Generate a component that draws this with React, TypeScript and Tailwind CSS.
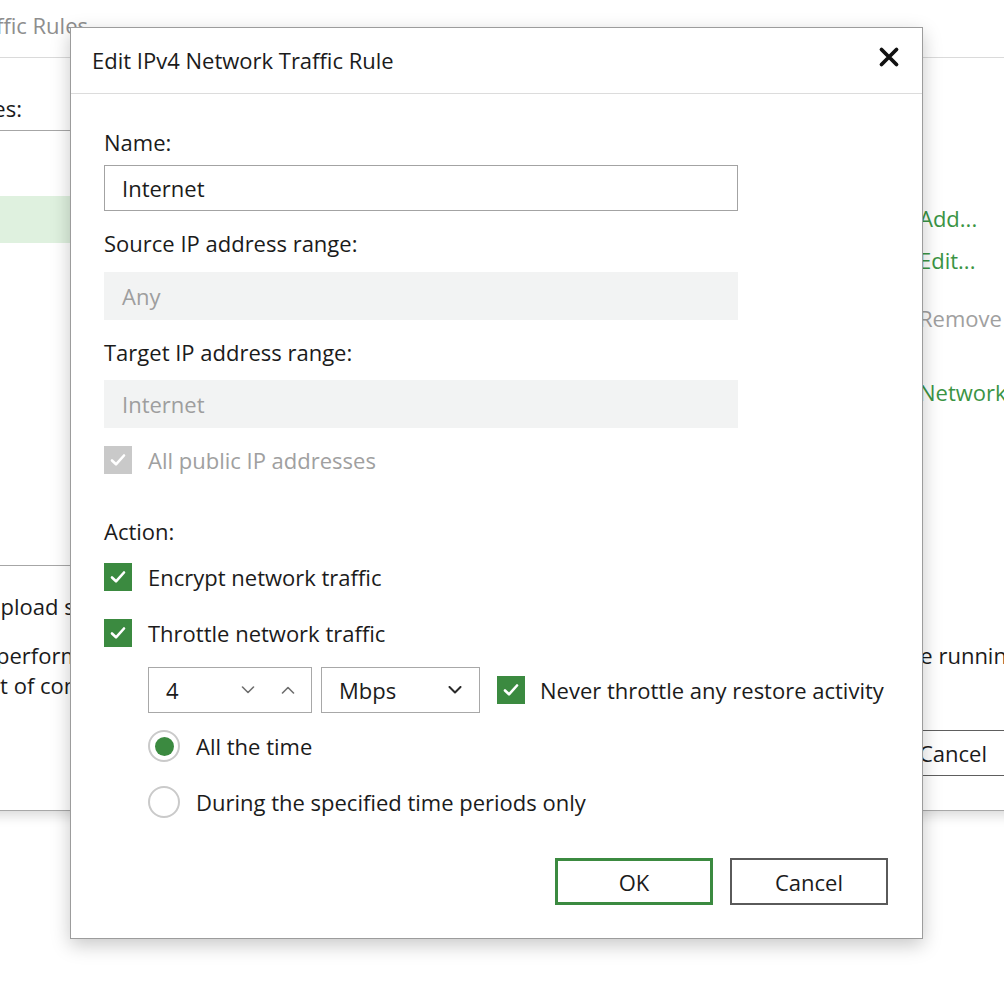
import React from 'react';

function Tick({ disabled = false }: { disabled?: boolean }) {
  return (
    <span
      className={`flex h-[28px] w-[28px] shrink-0 items-center justify-center ${
        disabled ? 'bg-[#c9c9c9]' : 'bg-[#3b8a40]'
      }`}
    >
      <svg width="20" height="20" viewBox="0 0 20 20" fill="none">
        <path d="M4 10.5 L8 14.3 L16 5.5" stroke="white" strokeWidth="2.6" strokeLinecap="round" strokeLinejoin="round" />
      </svg>
    </span>
  );
}

function Radio({ on = false }: { on?: boolean }) {
  return (
    <span className="flex h-[32px] w-[32px] shrink-0 items-center justify-center rounded-full border-2 border-[#cacaca] bg-white">
      {on && <span className="h-[19px] w-[19px] rounded-full bg-[#3b8a40]" />}
    </span>
  );
}

function Chevron({ up = false, bold = false }: { up?: boolean; bold?: boolean }) {
  return (
    <svg width="14" height="8" viewBox="0 0 14 8" fill="none">
      <path
        d={up ? 'M1.5 7 L7 1.5 L12.5 7' : 'M1.5 1 L7 6.5 L12.5 1'}
        stroke={bold ? '#2a2a2a' : '#6e6e6e'}
        strokeWidth={bold ? 2 : 1.6}
        strokeLinecap="round"
        strokeLinejoin="round"
      />
    </svg>
  );
}

function CheckRow({ label, disabled = false }: { label: string; disabled?: boolean }) {
  return (
    <div className="flex h-[28px] items-center gap-[16px]">
      <Tick disabled={disabled} />
      <span className={disabled ? 'text-[#a0a0a0]' : ''}>{label}</span>
    </div>
  );
}

export default function App() {
  return (
    <div className="relative h-[988px] w-[1004px] overflow-hidden bg-white font-['Open_Sans','Noto_Sans',sans-serif] text-[22px] leading-[28px] text-[#1b1b1b]">
      {/* window behind the dialog */}
      <div className="absolute left-[-300px] top-[-20px] flex h-[831px] w-[1500px] flex-col border-b border-[#a8a8a8] bg-white shadow-[0_4px_12px_rgba(0,0,0,0.16)]">
        <div className="flex h-[78px] shrink-0 items-start border-b border-[#dadada] pt-[31px]">
          <div className="flex w-[388px] justify-end whitespace-nowrap text-[#8e8e8e]">Network Traffic Rules</div>
        </div>
        <div className="mt-[36px] flex w-[322px] justify-end">Rules:</div>
        <div className="mt-[8px] flex">
          <div className="flex h-[436px] w-[1195px] flex-col border border-[#a6a6a6]">
            <div className="h-[65px]" />
            <div className="h-[47px] bg-[#dff1df]" />
          </div>
          <div className="ml-[24px] flex flex-col pt-[74px] text-[#3a9444]">
            <span>Add...</span>
            <span className="mt-[14px]">Edit...</span>
            <span className="mt-[30px] text-[#a0a0a0]">Remove</span>
            <span className="mt-[46px]">Networks...</span>
          </div>
        </div>
        <div className="mt-[26px] whitespace-nowrap pl-[287px]">upload streams per job:</div>
        <div className="mt-[21px] flex whitespace-nowrap">
          <div className="w-[1219px] pl-[296px]">performance of data transfer over WAN</div>
          <div className="-ml-[20px]">the running jobs</div>
        </div>
        <div className="mt-[2px] whitespace-nowrap pl-[256px]">most of connections</div>
        <div className="mt-[31px] flex pl-[1174px]">
          <div className="flex h-[46px] w-[158px] items-center justify-center border border-[#5e5e5e]">Cancel</div>
        </div>
      </div>

      {/* dialog */}
      <div className="absolute left-[70px] top-[27px] flex h-[912px] w-[853px] flex-col border border-[#9c9c9c] bg-white shadow-[0_6px_18px_rgba(0,0,0,0.22)]">
        <div className="flex h-[66px] shrink-0 items-center justify-between border-b border-[#dcdcdc] pl-[21px] pr-[22px]">
          <span className="-mt-[1px]">Edit IPv4 Network Traffic Rule</span>
          <svg className="-mt-[7px]" width="22" height="22" viewBox="0 0 22 22">
            <path d="M3.5 3.5 L18.5 18.5 M18.5 3.5 L3.5 18.5" stroke="#111" strokeWidth="3.8" strokeLinecap="round" />
          </svg>
        </div>

        <div className="flex flex-col pl-[33px] pr-[34px] pt-[34px]">
          <span>Name:</span>
          <div className="mt-[9px] flex h-[46px] w-[634px] items-center border border-[#a3a3a3] pl-[17px]">Internet</div>

          <span className="mt-[18px]">Source IP address range:</span>
          <div className="mt-[15px] flex h-[48px] w-[634px] items-center bg-[#f2f3f3] pl-[18px] text-[#9e9e9e]">Any</div>

          <span className="mt-[18px]">Target IP address range:</span>
          <div className="mt-[14px] flex h-[48px] w-[634px] items-center bg-[#f2f3f3] pl-[18px] text-[#9e9e9e]">Internet</div>

          <div className="mt-[18px]">
            <CheckRow label="All public IP addresses" disabled />
          </div>

          <span className="mt-[43px]">Action:</span>
          <div className="mt-[18px]">
            <CheckRow label="Encrypt network traffic" />
          </div>
          <div className="mt-[28px]">
            <CheckRow label="Throttle network traffic" />
          </div>

          <div className="ml-[44px] mt-[20px] flex h-[46px] items-center">
            <div className="flex h-[46px] w-[164px] items-center border border-[#a8a8a8] pl-[17px] pr-[16px]">
              <span className="flex-1">4</span>
              <Chevron />
              <span className="ml-[26px]">
                <Chevron up />
              </span>
            </div>
            <div className="ml-[9px] flex h-[46px] w-[159px] items-center justify-between border border-[#a8a8a8] pl-[17px] pr-[17px]">
              <span>Mbps</span>
              <Chevron bold />
            </div>
            <div className="ml-[17px] flex items-center gap-[15px]">
              <Tick />
              <span>Never throttle any restore activity</span>
            </div>
          </div>

          <div className="ml-[44px] mt-[17px] flex h-[32px] items-center gap-[16px]">
            <Radio on />
            <span>All the time</span>
          </div>
          <div className="ml-[44px] mt-[24px] flex h-[32px] items-center gap-[16px]">
            <Radio />
            <span>During the specified time periods only</span>
          </div>

          <div className="mt-[40px] flex justify-end gap-[17px]">
            <div className="flex h-[47px] w-[158px] items-center justify-center border-[3px] border-[#3b8a40]">OK</div>
            <div className="flex h-[47px] w-[158px] items-center justify-center border-2 border-[#5a5a5a]">Cancel</div>
          </div>
        </div>
      </div>
    </div>
  );
}
